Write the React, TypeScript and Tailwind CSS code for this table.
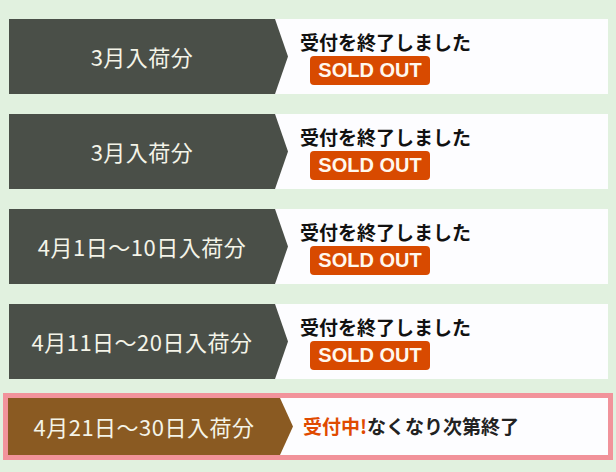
import React from "react";

const rows = [
  { label: "3月入荷分" },
  { label: "3月入荷分" },
  { label: "4月1日～10日入荷分" },
  { label: "4月11日～20日入荷分" },
];

const arrow =
  "[clip-path:polygon(0_0,calc(100%-13px)_0,100%_50%,calc(100%-13px)_100%,0_100%)]";

export default function App() {
  return (
    <div
      className="w-[616px] h-[472px] bg-[#e1f1df] pl-[9px] pt-[19px] overflow-hidden"
      style={{ fontFamily: '"Noto Sans CJK JP", "Noto Sans", sans-serif' }}
    >
      <div className="w-[599px] flex flex-col gap-[20px]">
        {rows.map((r, i) => (
          <div key={i} className="flex h-[75px] bg-[#fdfdff]">
            <div
              className={`w-[279px] shrink-0 bg-[#4a4f48] pr-[13px] flex items-center justify-center text-[22px] tracking-[0.5px] text-[#f4f4e8] ${arrow}`}
            >
              {r.label}
            </div>
            <div className="pl-[12px] flex flex-col justify-center">
              <div className="text-[19px] font-bold text-[#111] leading-[26px]">
                受付を終了しました
              </div>
              <div className="ml-[10px] mt-[1px] w-[120px] h-[29px] rounded-[4px] bg-[#d84a00] flex items-center justify-center">
                <span
                  className="text-[20px] font-bold text-[#fff8ee] leading-none"
                  style={{ fontFamily: '"Liberation Sans", Arial, sans-serif' }}
                >
                  SOLD OUT
                </span>
              </div>
            </div>
          </div>
        ))}
      </div>
      <div className="mt-[14px] -ml-[6px] w-[610px] h-[67px] border-[5px] border-[#f2939b] bg-[#fdfdff] flex">
        <div
          className={`w-[285px] shrink-0 bg-[#8a5a22] pr-[13px] flex items-center justify-center text-[22px] tracking-[0.5px] text-[#f4f4e8] ${arrow}`}
        >
          4月21日～30日入荷分
        </div>
        <div className="pl-[10px] flex items-center text-[19px] font-bold text-[#222]">
          <span className="text-[#e04a00]">受付中!</span>
          なくなり次第終了
        </div>
      </div>
    </div>
  );
}
